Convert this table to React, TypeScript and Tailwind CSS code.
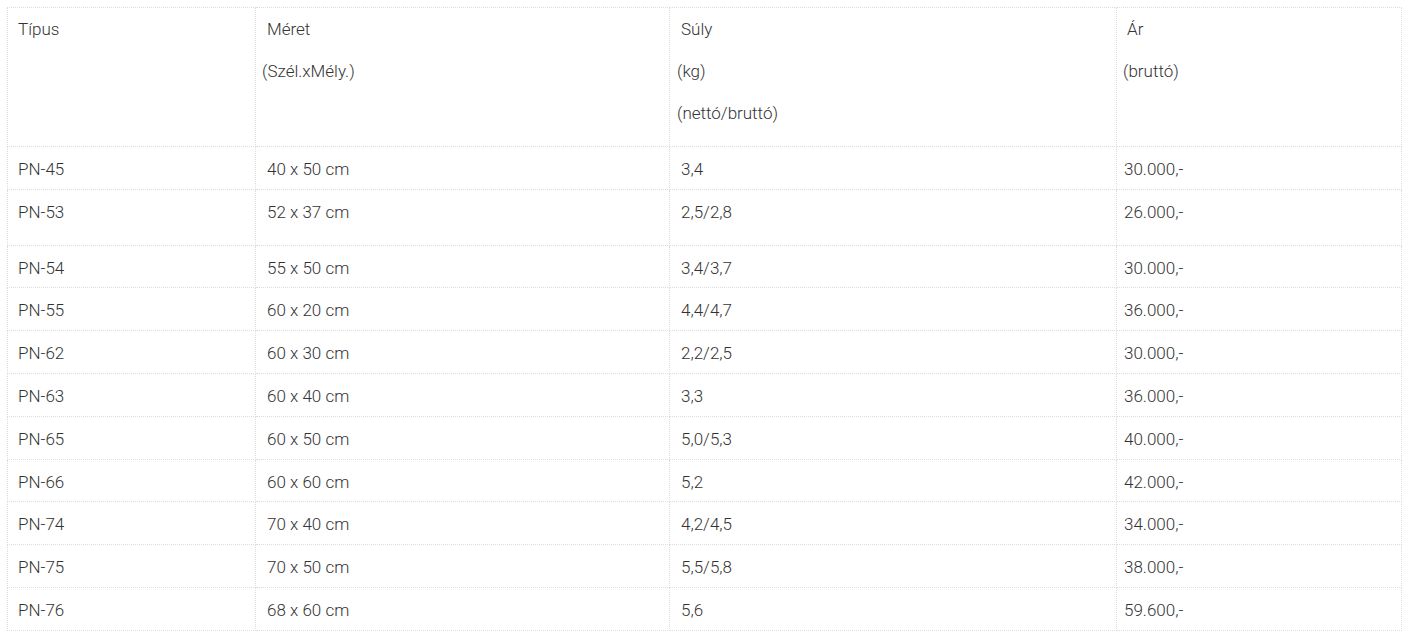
// Termék méret / súly / ár táblázat

type Row = {
  type: string;
  size: string;
  weight: string;
  price: string;
  tall?: boolean;
};

const rows: Row[] = [
  { type: 'PN-45', size: '40 x 50 cm', weight: '3,4', price: '30.000,-' },
  { type: 'PN-53', size: '52 x 37 cm', weight: '2,5/2,8', price: '26.000,-', tall: true },
  { type: 'PN-54', size: '55 x 50 cm', weight: '3,4/3,7', price: '30.000,-' },
  { type: 'PN-55', size: '60 x 20 cm', weight: '4,4/4,7', price: '36.000,-' },
  { type: 'PN-62', size: '60 x 30 cm', weight: '2,2/2,5', price: '30.000,-' },
  { type: 'PN-63', size: '60 x 40 cm', weight: '3,3', price: '36.000,-' },
  { type: 'PN-65', size: '60 x 50 cm', weight: '5,0/5,3', price: '40.000,-' },
  { type: 'PN-66', size: '60 x 60 cm', weight: '5,2', price: '42.000,-' },
  { type: 'PN-74', size: '70 x 40 cm', weight: '4,2/4,5', price: '34.000,-' },
  { type: 'PN-75', size: '70 x 50 cm', weight: '5,5/5,8', price: '38.000,-' },
  { type: 'PN-76', size: '68 x 60 cm', weight: '5,6', price: '59.600,-' },
];

const cell = 'border border-dotted border-[#dcdcdc] align-top pr-2 pl-[6px]';

export default function App() {
  return (
    <div className="min-h-[640px] bg-white p-[7px] font-['Roboto',sans-serif] text-[17px] leading-[26px] font-light text-[#333]">
      <table className="w-[1394px] table-fixed border-collapse border border-dotted border-[#dcdcdc]">
        <colgroup>
          <col className="w-[248px]" />
          <col className="w-[414px]" />
          <col className="w-[447px]" />
          <col className="w-[285px]" />
        </colgroup>
        <thead>
          <tr className="h-[139px]">
            <th className={`${cell} pt-2 text-left font-light`}>
              <p className="pl-[4px]">Típus</p>
            </th>
            <th className={`${cell} pt-2 text-left font-light`}>
              <p className="pl-[5px]">Méret</p>
              <p className="mt-4">(Szél.xMély.)</p>
            </th>
            <th className={`${cell} pt-2 text-left font-light`}>
              <p className="pl-[5px]">Súly</p>
              <p className="mt-4 pl-[1px]">(kg)</p>
              <p className="mt-4 pl-[1px]">(nettó/bruttó)</p>
            </th>
            <th className={`${cell} pt-2 text-left font-light`}>
              <p className="pl-[4px]">Ár</p>
              <p className="mt-4">(bruttó)</p>
            </th>
          </tr>
        </thead>
        <tbody>
          {rows.map((r) => (
            <tr key={r.type} className={r.tall ? 'h-[55.8px]' : 'h-[42.8px]'}>
              <td className={`${cell} pt-[9px]`}>
                <span className="pl-[4px]">{r.type}</span>
              </td>
              <td className={`${cell} pt-[9px]`}>
                <span className="pl-[5px]">{r.size}</span>
              </td>
              <td className={`${cell} pt-[9px]`}>
                <span className="pl-[5px]">{r.weight}</span>
              </td>
              <td className={`${cell} pt-[9px]`}>
                <span className="pl-[1px]">{r.price}</span>
              </td>
            </tr>
          ))}
        </tbody>
      </table>
    </div>
  );
}
